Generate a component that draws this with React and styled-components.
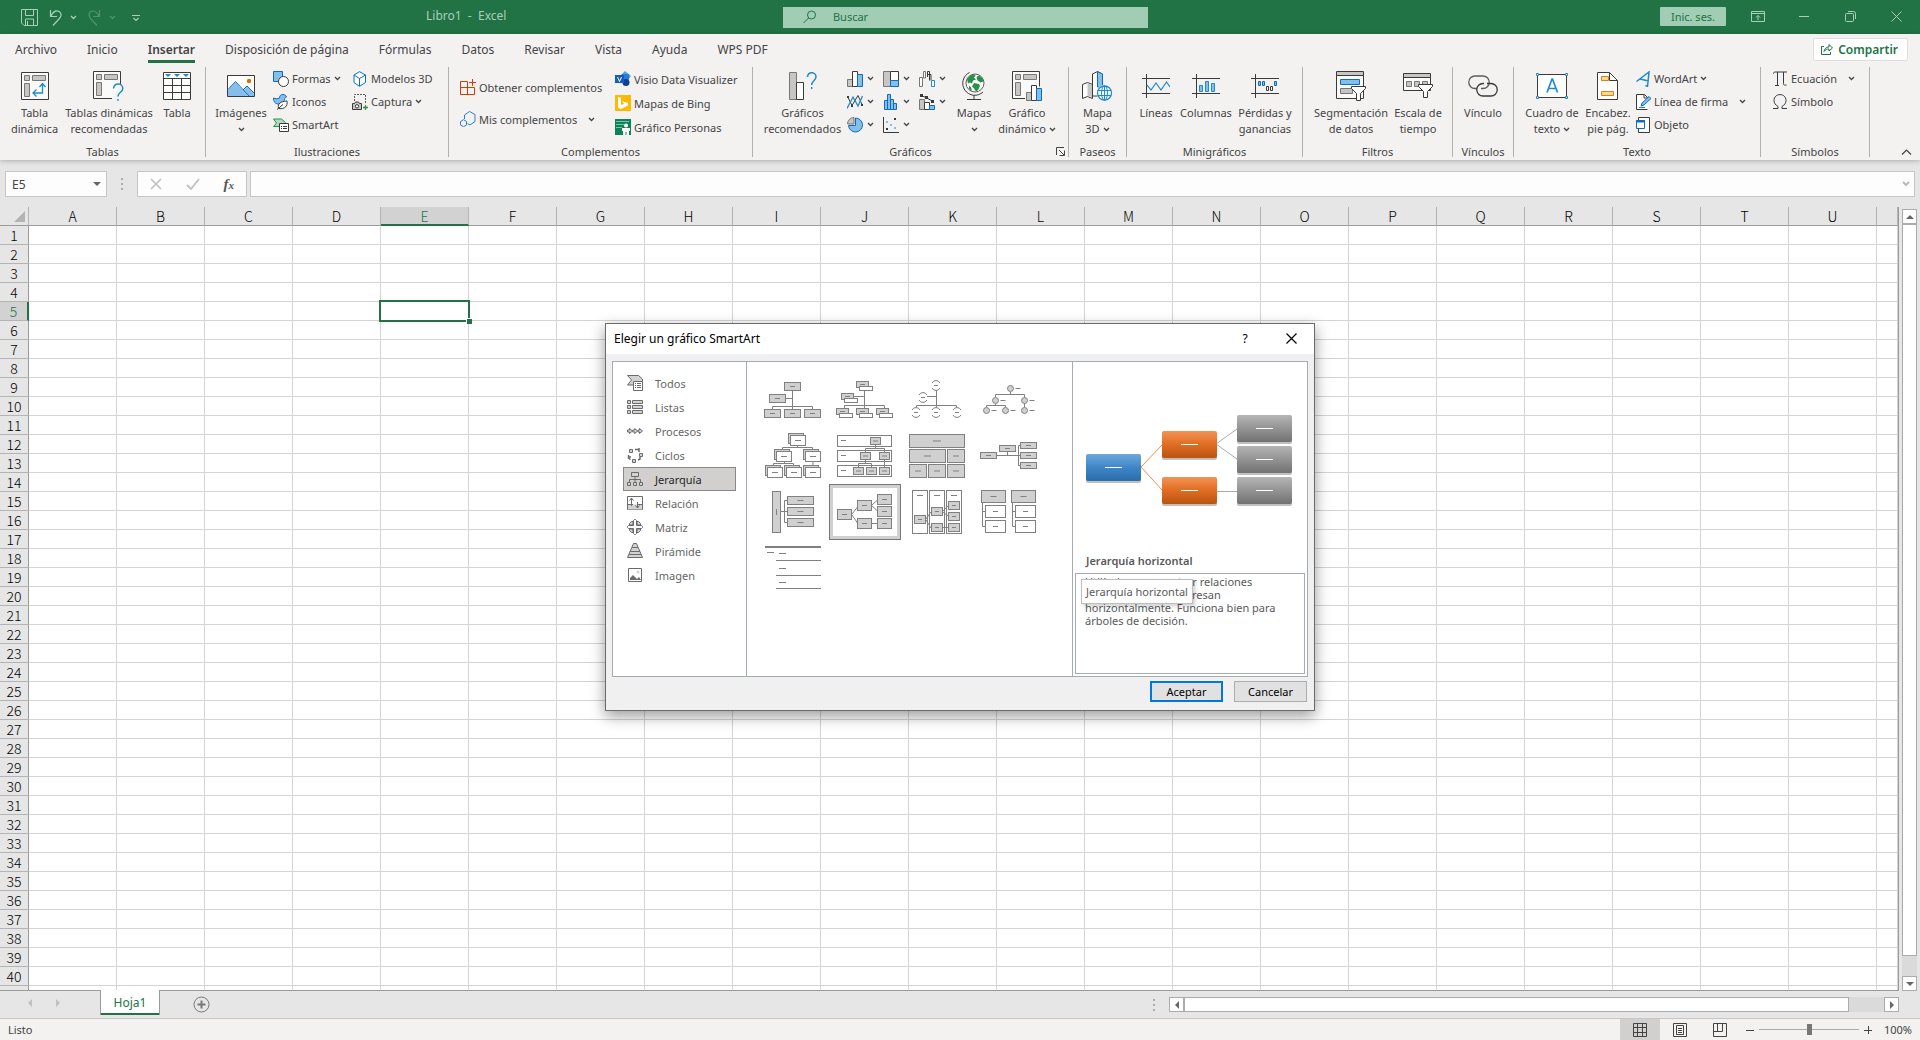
import { useState } from 'react'
import styled, { createGlobalStyle, css } from 'styled-components'

const GlobalStyle = createGlobalStyle`
    *, *::before, *::after {
        box-sizing: border-box;
    }
    body {
        margin: 0;
        overflow: hidden;
        font-family: "Noto Sans", "Open Sans", sans-serif;
        font-size: 11px;
        color: #444;
    }
    button, input {
        font: inherit;
        color: inherit;
        margin: 0;
        padding: 0;
        border: 0;
        border-radius: 0;
        background: none;
        outline: none;
    }
    svg {
        display: block;
        flex: none;
    }
`

const Window = styled.div`
    height: 100vh;
    display: flex;
    flex-direction: column;
    background: #e6e6e6;
`

/* title bar */

const TitleBar = styled.header`
    height: 34px;
    flex: none;
    display: flex;
    align-items: center;
    background: #217346;
    color: #a6d0b8;
    padding: 0 1px 6px 0;
`

const QuickAccess = styled.div`
    flex: 0 0 22.2%;
    display: flex;
    align-items: center;
    gap: 7px;
    padding: 7px 0 0 21px;
`

const IconButton = styled.button`
    display: flex;
    align-items: center;
    gap: 6px;
    opacity: ${({ $faded }) => ($faded ? 0.35 : 1)};
`

const DocName = styled.div`
    flex: 0 0 18.6%;
    font-size: 12px;
    line-height: 16px;
    white-space: pre;
    margin-top: 4px;
`

const Search = styled.label`
    width: 19%;
    height: 21px;
    margin-top: 6px;
    padding-left: 20px;
    display: flex;
    align-items: center;
    gap: 16px;
    background: #a0cdb3;
    color: #217346;

    input {
        flex: 1;
        min-width: 0;
        height: 19px;
        margin-bottom: 2px;
    }
    input::placeholder {
        color: #217346;
        opacity: 1;
    }
`

const WindowTools = styled.div`
    flex: 1;
    display: flex;
    justify-content: flex-end;
    align-items: center;
    margin-top: 5px;
`

const SignIn = styled.button`
    width: 66px;
    height: 19px;
    margin-right: 9px;
    border-radius: 1px;
    background: #a0cdb3;
    color: #217346;
`

const WinButton = styled.button`
    width: 46px;
    height: 24px;
    display: flex;
    align-items: center;
    justify-content: center;
`

/* ribbon */

const Ribbon = styled.section`
    flex: none;
    background: #f3f2f1;
    height: 126px;
    box-shadow: 0 1px 5px rgba(0, 0, 0, 0.25);
    position: relative;
    z-index: 1;
`

const Tabs = styled.nav`
    display: flex;
    align-items: center;
    height: 30px;
    padding-right: 12px;
`

const Tab = styled.button`
    height: 28px;
    padding: 0 15px;
    font-size: 12px;
    line-height: 29px;
    white-space: nowrap;
    color: #444;

    span {
        display: block;
        height: 28px;
        border-bottom: 3px solid ${({ $active }) => ($active ? '#217346' : 'transparent')};
        font-weight: ${({ $active }) => ($active ? 600 : 400)};
    }
`

const Share = styled.button`
    margin: 0 0 0 auto;
    height: 23px;
    padding: 0 9px 0 7px;
    display: flex;
    align-items: center;
    gap: 5px;
    background: #fff;
    border: 1px solid #e1dfdd;
    border-radius: 2px;
    color: #217346;
    font-size: 12px;
    font-weight: 600;
`

const RibbonBody = styled.div`
    display: flex;
    padding-top: 3px;
    height: 96px;
`

const GroupBox = styled.section`
    width: ${({ $width }) => $width}px;
    display: flex;
    flex-direction: column;
    flex: none;
    border-right: 1px solid transparent;
    border-image: linear-gradient(#b3b0ad 0 89px, transparent 89px) 1;
`

const GroupRow = styled.div`
    flex: 1;
    display: flex;
    padding-left: ${({ $pad }) => $pad || 0}px;
`

const GroupName = styled.div`
    height: 14px;
    line-height: 14px;
    margin-bottom: 1px;
    display: flex;
    justify-content: center;
    align-items: center;
    position: relative;

    button {
        position: absolute;
        right: 3px;
        top: 2px;
    }
`

const LargeButton = styled.button`
    width: ${({ $width }) => $width}px;
    display: flex;
    flex-direction: column;
    align-items: center;
    padding-top: 5px;
    line-height: 16px;
    white-space: nowrap;

    span {
        display: flex;
        align-items: center;
        gap: 3px;
        height: 16px;
    }
`

const LargeIcon = styled.div`
    height: 28px;
    margin-bottom: 5px;
    display: flex;
    align-items: center;
    justify-content: center;
`

const SmallColumn = styled.div`
    width: ${({ $width }) => ($width ? $width + 'px' : 'auto')};
    padding: ${({ $top }) => $top || 0}px 0 0 2px;
    display: flex;
    flex-direction: column;
`

const SmallButton = styled.button`
    height: ${({ $height }) => $height || 23}px;
    display: flex;
    align-items: center;
    gap: 3px;
    white-space: nowrap;
    text-align: left;

    span {
        margin-right: ${({ $split }) => ($split ? 8 : 0)}px;
    }
`

const ChartGrid = styled.div`
    display: grid;
    grid-template-columns: repeat(3, 36px);
    grid-auto-rows: 23px;
    padding-left: 4px;

    button {
        display: flex;
        align-items: center;
        gap: 4px;
    }
`

const Collapse = styled.button`
    margin: auto 8px 5px auto;
`

/* formula bar */

const FormulaRow = styled.div`
    flex: none;
    display: flex;
    align-items: stretch;
    height: 47px;
    padding: 11px 5px 10px;
`

const Field = styled.div`
    background: #fdfdfd;
    border: 1px solid #c6c6c6;
    display: flex;
    align-items: center;
    justify-content: space-between;
    padding: 0 5px 0 6px;
`

const NameBox = styled(Field)`
    width: 102px;

    input {
        width: 60px;
        font-size: 12px;
    }
`

const FormulaTools = styled(Field)`
    width: 110px;
    padding: 0 12px;
    margin-right: 3px;
`

const FxLabel = styled.span`
    font-family: "Liberation Serif", serif;
    font-style: italic;
    font-weight: 700;
    font-size: 15px;
    line-height: 16px;
    color: #555;

    small {
        font-size: 11px;
    }
`

const FormulaInput = styled(Field)`
    flex: 1;
    padding-right: 4px;

    input {
        flex: 1;
    }
`

const Grip = styled.div`
    width: 30px;
    flex: none;
    display: flex;
    align-items: center;
    justify-content: center;
`

/* sheet */

const SheetRow = styled.main`
    flex: 1;
    min-height: 0;
    display: flex;
`

const SheetClip = styled.div`
    flex: 1;
    min-width: 0;
    overflow: hidden;
    border-bottom: 1px solid #9b9b9b;
    border-right: 1px solid #9b9b9b;
`

const Sheet = styled.table`
    table-layout: fixed;
    width: 100%;
    border-collapse: separate;
    border-spacing: 0;
    font-family: "Noto Sans CJK SC", "Noto Sans", sans-serif;
    font-size: 14px;
    color: #000;

    th {
        font-weight: 300;
        padding: 0;
        overflow: hidden;
    }
`

const ColHead = styled.th`
    width: ${({ $rest }) => ($rest ? 'auto' : '88px')};
    height: 19px;
    line-height: 16px;
    background: ${({ $on }) => ($on ? '#d2d2d2' : '#e6e6e6')};
    color: ${({ $on }) => ($on ? '#217346' : 'inherit')};
    border-right: 1px solid #b4b4b4;
    border-bottom: ${({ $on }) => ($on ? '2px solid #217346' : '1px solid #9b9b9b')};
`

const Corner = styled.th`
    width: 29px;
    background: #e6e6e6;
    border-right: 1px solid #b4b4b4;
    border-bottom: 1px solid #9b9b9b;

    svg {
        margin-left: 14px;
    }
`

const RowHead = styled.th`
    height: 19px;
    line-height: 16px;
    background: ${({ $on }) => ($on ? '#d2d2d2' : '#e6e6e6')};
    color: ${({ $on }) => ($on ? '#217346' : 'inherit')};
    border-right: ${({ $on }) => ($on ? '2px solid #217346' : '1px solid #9b9b9b')};
    border-bottom: 1px solid #b4b4b4;
`

const Cell = styled.td`
    padding: 0;
    background: #fff;
    border-right: 1px solid #d4d4d4;
    border-bottom: 1px solid #d4d4d4;
    ${({ $on }) =>
        $on &&
        css`
            position: relative;
            z-index: 1;
        `}
`

const Selection = styled.div`
    position: absolute;
    inset: -2px;
    border: 2px solid #217346;

    &::after {
        content: '';
        position: absolute;
        right: -4px;
        bottom: -4px;
        width: 6px;
        height: 6px;
        background: #217346;
        border: 1px solid #fff;
        border-width: 1px 0 0 1px;
    }
`

const VScroll = styled.div`
    width: 21px;
    padding: 2px 3px 0;
    display: flex;
    flex-direction: column;
`

const ScrollButton = styled.button`
    width: 15px;
    height: 15px;
    flex: none;
    display: flex;
    align-items: center;
    justify-content: center;
    background: #fff;
    border: 1px solid #ababab;
`

const Track = styled.div`
    flex: 1;
    display: flex;
    flex-direction: ${({ $vertical }) => ($vertical ? 'column' : 'row')};
    background: #dadada;
`

const Thumb = styled.div`
    flex: 0 0 ${({ $size }) => $size};
    background: #fff;
    border: 1px solid #ababab;
`

/* bottom bars */

const SheetTabs = styled.div`
    flex: none;
    height: 27px;
    display: flex;
    align-items: flex-start;
    padding-right: 21px;
`

const SheetArrows = styled.div`
    width: 100px;
    display: flex;
    gap: 20px;
    padding: 8px 0 0 26px;
`

const SheetTab = styled.button`
    width: 60px;
    height: 25px;
    margin-top: -1px;
    background: #fff;
    color: #217346;
    font-size: 12px;
    border: 1px solid #9b9b9b;
    border-width: 0 1px 0;
    box-shadow: inset 0 -2px #217346;
    position: relative;
`

const AddSheet = styled.button`
    margin: 5px 0 0 33px;
`

const HScroll = styled.div`
    width: 760px;
    margin: 6px 0 0 auto;
    height: 15px;
    display: flex;
`

const StatusBar = styled.footer`
    flex: none;
    height: 22px;
    border-top: 1px solid #c6c6c6;
    background: #f3f2f1;
    display: flex;
    align-items: center;
    padding: 0 8px;
`

const StatusRight = styled.div`
    margin-left: auto;
    height: 100%;
    display: flex;
    align-items: center;
`

const Views = styled.div`
    display: flex;
    margin-right: 6px;
`

const ViewButton = styled.button`
    width: 40px;
    height: 21px;
    display: flex;
    align-items: center;
    justify-content: center;
    background: ${({ $on }) => ($on ? '#d2d0ce' : 'transparent')};
`

const ZoomSlider = styled.input`
    appearance: none;
    width: 100px;
    height: 12px;
    margin: 0 5px;
    background: linear-gradient(#ababab, #ababab) center / 100% 1px no-repeat;

    &::-webkit-slider-thumb {
        appearance: none;
        width: 5px;
        height: 11px;
        background: #777;
    }
`

const ZoomValue = styled.span`
    width: 40px;
    text-align: right;
`

/* dialog */

const Overlay = styled.div`
    position: absolute;
    inset: 0;
    display: flex;
    align-items: center;
    justify-content: center;
    padding-bottom: 6px;
    z-index: 2;
`

const DialogBox = styled.section`
    width: 710px;
    background: #f0f0f0;
    border: 1px solid #6b6b6b;
    box-shadow: 0 5px 14px rgba(0, 0, 0, 0.4);
`

const DialogTitle = styled.header`
    height: 30px;
    display: flex;
    align-items: center;
    padding: 0 0 2px 8px;
    background: #fff;
    color: #000;
    font-size: 12px;

    h1 {
        flex: 1;
        margin: 0;
        font-size: 12px;
        font-weight: 400;
    }
    button {
        width: 46px;
        height: 28px;
        display: flex;
        align-items: center;
        justify-content: center;
    }
`

const DialogPanel = styled.div`
    margin: 7px 6px 0;
    height: 316px;
    display: grid;
    grid-template-columns: 134px 326px 1fr;
    background: #fff;
    border: 1px solid #a5abb3;
`

const Categories = styled.div`
    padding: 9px 10px;
    border-right: 1px solid #a5abb3;
`

const Category = styled.button`
    width: 113px;
    height: 24px;
    padding-left: 3px;
    display: flex;
    align-items: center;
    gap: 12px;
    border: 1px solid ${({ $on }) => ($on ? '#8a8886' : 'transparent')};
    background: ${({ $on }) => ($on ? '#d2d0ce' : 'transparent')};
    color: ${({ $on }) => ($on ? '#262626' : '#666')};
`

const Gallery = styled.div`
    padding: 10px;
    display: grid;
    grid-template-columns: repeat(4, 72px);
    grid-auto-rows: 56px;
    align-content: start;
    border-right: 1px solid #a5abb3;
`

const Thumbnail = styled.button`
    width: 72px;
    height: 56px;
    ${({ $on }) =>
        $on &&
        css`
            outline: 1px solid #777;
            outline-offset: -1px;
            box-shadow: inset 0 0 0 4px #d2d0ce;
        `}
`

const Preview = styled.div`
    display: flex;
    flex-direction: column;
    padding: 0 2px 2px;
    color: #595959;

    h2 {
        margin: 0 0 4px 11px;
        font-size: 11px;
        line-height: 16px;
        font-weight: 600;
    }
`

const PreviewArt = styled.div`
    height: 191px;
    margin-left: -2px;
`

const Description = styled.div`
    flex: 1;
    border: 1px solid #a5abb3;
    padding: 1px 9px;
    line-height: 13px;
    position: relative;

    p {
        margin: 0;
        white-space: pre-line;
    }
`

const Tooltip = styled.div`
    position: absolute;
    left: 5px;
    top: 5px;
    height: 25px;
    padding: 0 4px;
    line-height: 23px;
    white-space: nowrap;
    background: #fff;
    border: 1px solid #bebebe;
    box-shadow: 2px 2px 4px rgba(0, 0, 0, 0.2);
`

const DialogButtons = styled.footer`
    display: flex;
    justify-content: flex-end;
    gap: 11px;
    padding: 4px 7px 8px;
`

const DialogButton = styled.button`
    width: 73px;
    height: 21px;
    background: #e1e1e1;
    color: #000;
    border: ${({ $primary }) => ($primary ? '2px solid #0078d7' : '1px solid #adadad')};
`

/* drawing helpers */

const dark = '#3b3a39'
const blue = '#1e8bcd'
const navy = '#0f6cbd'
const sky = '#83beec'
const silver = '#c8c6c4'

const Svg = ({ w = 16, h = 16, children, ...rest }) => (
    <svg width={w} height={h} viewBox={`0 0 ${w} ${h}`} fill='none' aria-hidden='true' {...rest}>
        {children}
    </svg>
)

const Chevron = ({ color = '#444' }) => (
    <Svg w={7} h={5}>
        <path d='M1 1l2.500 2.500L6 1' stroke={color} strokeWidth='1.300' />
    </Svg>
)

const Triangle = ({ dir, color = '#666' }) => {
    const shapes = {
        up: 'M0 6h8L4 2z',
        down: 'M0 2h8L4 6z',
        left: 'M6 0v8L2 4z',
        right: 'M2 0v8l4-4z',
    }
    return (
        <Svg w={8} h={8}>
            <path d={shapes[dir]} fill={color} />
        </Svg>
    )
}

const Dots = () => (
    <Svg w={2} h={12}>
        <path d='M0 0h2v2H0zM0 5h2v2H0zM0 10h2v2H0z' fill='#ababab' />
    </Svg>
)

/* large ribbon icons */

const PivotIcon = () => (
    <Svg w={28} h={28}>
        <path d='M.5.5h27v27H.5z' fill='#fafafa' stroke={dark} />
        <path d='M3.5 3.5h5v5h-5zM11.500 3.500h13v5h-13zM3.500 11.500h5v13h-5z' fill={silver} stroke='#797775' />
        <path d='M21.500 12v9h-9M18.500 15l3-3.500 3 3.500M15.500 17.500L12 21l3.500 3.500' stroke={blue} strokeWidth='1.300' />
    </Svg>
)

const PivotHelpIcon = () => (
    <Svg w={32} h={30}>
        <path d='M19 27.500H.5V.5h27v13' fill='#fafafa' stroke={dark} />
        <path d='M3.500 3.500h5v5h-5zM11.500 3.500h13v5h-13zM3.500 11.500h5v13h-5z' fill={silver} stroke='#797775' />
        <path d='M20.500 17.500c.3-3 2.200-4.500 4.700-4.500s4.600 1.800 4.600 4.400c0 4-4.800 3.800-4.800 8M25 28v1.800' stroke={blue} strokeWidth='1.500' />
    </Svg>
)

const TableIcon = () => (
    <Svg w={28} h={28}>
        <path d='M.5.5h27v27H.5z' fill='#fff' stroke={dark} />
        <path d='M1 6.500h26M1 13.500h26M1 20.500h26M9.500 6v21M18.500 6v21' stroke={dark} />
        <path d='M2 2h6L5 5zM11 2h6l-3 3zM20 2h6l-3 3z' fill={blue} />
    </Svg>
)

const PictureIcon = () => (
    <Svg w={28} h={22}>
        <path d='M.5.5h27v21H.5z' fill='#fff' stroke={dark} />
        <path d='M1 15l7.500-8L21 21H1z' fill={sky} />
        <path d='M16 15.500l4-4 7 7V21h-6z' fill={sky} />
        <path d='M1 14.500l7.500-8L22 21M16 15l4-4 7 7' stroke={navy} />
        <circle cx='22' cy='6' r='2.200' fill='#e06c00' />
    </Svg>
)

const ChartHelpIcon = () => (
    <Svg w={30} h={28}>
        <path d='M1.500.5h7v27h-7z' fill={silver} stroke='#797775' />
        <path d='M8.500 10.500h7v17h-7z' fill='#fff' stroke={dark} />
        <path d='M19.500 5c.3-3 2-4.300 4.200-4.300S28 2.300 28 4.800c0 4-4.300 4-4.300 8.200M23.700 15v2' stroke={blue} strokeWidth='1.500' />
    </Svg>
)

const GlobeIcon = () => (
    <Svg w={26} h={30}>
        <circle cx='14' cy='12' r='9' fill='#fff' stroke='#605e5c' />
        <path d='M6 8c2-3 5-5 8-4.500 1 1 0 2-1 3l2 2-3 1-1 3-2-1-2 1zM17 4.500c3 .5 5 3 5.500 6l-3 1-3-2-1-3zM13 12l5 1 1 2-2 4-2 1.500-2-3-2-2zM8 15l2 1 1 4-3-2z' fill='#2a9149' />
        <path d='M8.500 1.500A12 12 0 1 0 22 21M13 24v4M6 28.500h14' stroke={dark} />
    </Svg>
)

const PivotChartIcon = () => (
    <Svg w={30} h={30}>
        <path d='M13 27.500H.5V.5h27v15' fill='#fafafa' stroke={dark} />
        <path d='M3.500 3.500h5v5h-5zM11.500 3.500h13v5h-13zM3.500 11.500h5v13h-5z' fill={silver} stroke='#797775' />
        <path d='M14.500 21.500h5v8h-5z' fill={silver} stroke='#797775' />
        <path d='M19.500 14.500h5v15h-5z' fill='#fff' stroke={dark} />
        <path d='M24.500 17.500h5v12h-5z' fill={sky} stroke={navy} />
    </Svg>
)

const Map3DIcon = () => (
    <Svg w={31} h={30}>
        <path d='M.5 13.500l5-2 5 2v14l-5-2-5 2z' fill='#fff' stroke={dark} />
        <path d='M5.500 12l4.500 2v12l-4.500-1z' fill={silver} />
        <path d='M10.500 3l5-2.500 5 2.500v22h-10z' fill='#fff' stroke={dark} />
        <path d='M15.500.7l5 2.300v14l-5-1z' fill={sky} stroke={navy} />
        <circle cx='22.500' cy='22' r='8' fill='#f3f2f1' />
        <circle cx='22.500' cy='22' r='7' fill='#fff' stroke={blue} strokeWidth='1.300' />
        <ellipse cx='22.500' cy='22' rx='3' ry='7' stroke={blue} />
        <path d='M16 19.500h13M16 24.500h13M22.500 15v14' stroke={blue} />
    </Svg>
)

const SparkFrame = ({ children }) => (
    <Svg w={28} h={24}>
        <path d='M0 4.500h28M0 19.500h28M4.500 0v24' stroke={dark} />
        {children}
    </Svg>
)

const SparkLineIcon = () => (
    <SparkFrame>
        <path d='M5 11l4 5 5-7 5 7 5.500-8 3.500 5' stroke={blue} strokeWidth='1.200' />
    </SparkFrame>
)

const SparkColumnIcon = () => (
    <SparkFrame>
        <path d='M7.500 11.500h3v6h-3zM13.500 7.500h3v10h-3zM19.500 9.500h3v8h-3z' fill={sky} stroke={blue} />
    </SparkFrame>
)

const SparkWinIcon = () => (
    <SparkFrame>
        <path d='M7.500 7.500h2v4h-2zM11.500 7.500h2v4h-2zM23.500 7.500h2v4h-2z' fill={sky} stroke={navy} />
        <path d='M15.500 12.500h2v4h-2zM19.500 12.500h2v4h-2z' fill='#fff' stroke={dark} />
    </SparkFrame>
)

const SlicerIcon = () => (
    <Svg w={30} h={30}>
        <path d='M.5.5h27v27H.5z' fill='#fafafa' stroke={dark} />
        <path d='M1 1h26v3H1z' fill={silver} />
        <path d='M1 4.500h26' stroke={dark} />
        <path d='M4.500 8.500h19v5h-19z' fill={sky} stroke={navy} />
        <path d='M4.500 17.500h12v5h-12z' fill={silver} stroke='#797775' />
        <path d='M15.500 15.500h14v2l-5 5v7h-4v-7l-5-5z' fill='#fff' stroke={dark} />
    </Svg>
)

const TimelineIcon = () => (
    <Svg w={30} h={26}>
        <path d='M.5.5h27v17H.5z' fill='#fafafa' stroke={dark} />
        <path d='M1 1h26v3H1z' fill={silver} />
        <path d='M1 4.500h26' stroke={dark} />
        <path d='M3.500 8.500h5v5h-5zM11.500 8.500h5v5h-5zM19.500 8.500h5v3h-5z' fill={silver} stroke='#797775' />
        <path d='M15.500 11.500h14v2l-5 5v6h-4v-6l-5-5z' fill='#fff' stroke={dark} />
    </Svg>
)

const LinkIcon = () => (
    <Svg w={30} h={22}>
        <path d='M9 13.500H7a6.200 6.200 0 0 1 0-12.500h8a6.200 6.200 0 0 1 0 12.500h-2' stroke='#605e5c' strokeWidth='1.300' />
        <path d='M19 8.500h4a6.200 6.200 0 0 1 0 12.500h-8a6.200 6.200 0 0 1 0-12.500h1' stroke={dark} strokeWidth='1.300' />
    </Svg>
)

const TextBoxIcon = () => (
    <Svg w={32} h={26}>
        <path d='M1.500 1.500h29v23h-29z' fill='#fff' stroke={dark} />
        <path d='M11 19.500L16 6h.5l5 13.500M12.700 15.500h7' stroke={blue} strokeWidth='1.700' />
        <path d='M.5.5h2v2h-2zM29.500.5h2v2h-2zM.5 23.500h2v2h-2zM29.500 23.500h2v2h-2z' fill='#fff' stroke={blue} />
    </Svg>
)

const HeaderFooterIcon = () => (
    <Svg w={22} h={28}>
        <path d='M.5.5h12l8 8v19H.5z' fill='#fff' stroke={dark} />
        <path d='M12.500.5v8h8' stroke={dark} />
        <path d='M4.500 4.500h7v4h-7zM4.500 19.500h12v4h-12z' fill='#fcd98f' stroke='#e07c1a' />
    </Svg>
)

/* small ribbon icons */

const ShapesIcon = () => (
    <Svg>
        <path d='M.5.5h9v10h-9z' fill={sky} stroke={navy} />
        <circle cx='10.500' cy='10.500' r='5' fill='#fff' stroke={dark} />
    </Svg>
)

const IconsIcon = () => (
    <Svg>
        <path d='M.5 4c2 1 4 1 6 0 0-2.500 1.500-3.500 3.500-3.500s3 1 3.500 2.500c-1 .5-2 1-2 2.500 0 2-3 4.500-6 4.500S.5 8 .5 4z' fill={sky} stroke={navy} />
        <path d='M5.500 14c-1-4.500 2-6.500 8.500-7 1 5-2.500 8.500-8 7.500zM4 15.500l6-5' fill='#fff' stroke={dark} />
    </Svg>
)

const SmartArtIcon = () => (
    <Svg w={16} h={14}>
        <path d='M.5 1h8l4 3.500-3 4h-9l3-3.500z' fill='#b1dcbe' stroke='#2a9149' />
        <path d='M6.500 5.500h9v8h-9z' fill='#fff' stroke={dark} />
        <path d='M8 8.500h1M10 8.500h4M8 10.500h1M10 10.500h4' stroke={dark} />
    </Svg>
)

const CubeIcon = () => (
    <Svg>
        <path d='M2 4l5.500-3.300L13.500 4v7.500L7.500 15.300 2 11.500z' fill='#fff' stroke={navy} />
        <path d='M2 4l5.500 3.500L13.500 4M7.500 7.500v7.500' stroke={navy} />
    </Svg>
)

const CaptureIcon = () => (
    <Svg>
        <path d='M2.500 7V.5h11v9' stroke='#605e5c' strokeDasharray='2 1' />
        <path d='M.5 9.500h2l1-1.500h3l1 1.500h2v6h-9z' fill={silver} stroke={dark} />
        <circle cx='5' cy='12.300' r='1.700' fill='#fff' stroke={dark} />
        <path d='M13.500 11v5M11 13.500h5' stroke='#2a9149' strokeWidth='1.300' />
    </Svg>
)

const StoreIcon = () => (
    <Svg>
        <path d='M.5 2.500h7v6M.5 2.500v13h14v-7H.5M7.500 8.500v7' stroke='#d83b01' />
        <path d='M12.500 0v7M9 3.500h7' stroke='#d83b01' />
    </Svg>
)

const AddinsIcon = () => (
    <Svg>
        <path d='M4.500 8V4l5-3.500 5.500 3v7L10 14l-2.500-1.500' stroke='#2b7cd3' />
        <path d='M.5 10.500l3-1.800 3 1.800V14l-3 1.700-3-1.700z' stroke='#2b7cd3' />
    </Svg>
)

const VisioIcon = () => (
    <Svg>
        <path d='M10 0l6 5-3 4h-3L6 4z' fill='#41a5ee' />
        <path d='M7 3h7v5l-3 6-5-3z' fill='#2b7cd3' />
        <circle cx='11' cy='11.500' r='3.500' fill='#103f91' />
        <path d='M0 4h9v8H0z' fill='#185abd' />
        <path d='M2.500 6l2 4.500 2-4.500' stroke='#fff' />
    </Svg>
)

const BingIcon = () => (
    <Svg>
        <path d='M0 0h16v16H0z' fill='#ffb900' />
        <path d='M3 2l3 1v8l-3 2zM3 13l3-3 3-1-2-3 6 2v2.500L6 14z' fill='#fff' />
    </Svg>
)

const PeopleIcon = () => (
    <Svg>
        <path d='M0 0h16v16H0z' fill='#10825a' />
        <path d='M1 2.500h13M1 5.500h8M1 8.500h6' stroke='#7ac4a6' />
        <circle cx='11' cy='6.500' r='2' fill='#fff' />
        <path d='M7 9h8v3h-1v4h-2.500v-3h-1v3H8v-4H7z' fill='#fff' />
    </Svg>
)

const ColumnChartIcon = () => (
    <Svg>
        <path d='M.5 8.500h5v7h-5z' fill={silver} stroke='#797775' />
        <path d='M5.500.5h5v15h-5z' fill='#fff' stroke={dark} />
        <path d='M10.500 3.500h5v12h-5z' fill={sky} stroke={navy} />
    </Svg>
)

const TreemapIcon = () => (
    <Svg>
        <path d='M.5.5h7v15h-7z' fill={silver} stroke='#797775' />
        <path d='M7.500.5h8v9h-8z' fill='#fff' stroke={dark} />
        <path d='M7.500 9.500h8v6h-8z' fill={sky} stroke={navy} />
    </Svg>
)

const WaterfallIcon = () => (
    <Svg>
        <path d='M.5 15.500v-9h3v9zM4.500 7V.5h2V7z' fill='#fff' stroke='#797775' />
        <path d='M8.500 6V.5h2v9M8 3.500h4v6' stroke={dark} />
        <path d='M12.500 9.500h3v6h-3z' fill='#fff' stroke={blue} />
    </Svg>
)

const LineChartIcon = () => (
    <Svg>
        <path d='M1 3.500l4 8 6-10 4 9' stroke={dark} />
        <path d='M0 14.500L6 3l5 9 4.500-10' stroke={blue} strokeWidth='1.300' />
        <path d='M0 2h2v2H0zM4 11h2v2H4zM14 10h2v2h-2z' fill={dark} />
    </Svg>
)

const HistogramIcon = () => (
    <Svg>
        <path d='M1.500 6.500h3v9h-3zM4.500.5h3v15h-3zM7.500 5.500h3v10h-3zM10.500 9.500h3v6h-3z' fill={sky} stroke={navy} />
    </Svg>
)

const ComboIcon = () => (
    <Svg>
        <path d='M.5 5.500h5v10h-5z' fill={silver} stroke='#797775' />
        <path d='M5.500 8.500h5v7h-5z' fill='#fff' stroke={dark} />
        <path d='M10.500 11.500h5v4h-5z' fill={sky} stroke={navy} />
        <path d='M2 1.500l5 2 7 4' stroke={dark} />
        <path d='M1 0h3v3H1zM6 2h3v3H6zM12 6h3v3h-3z' fill={dark} />
    </Svg>
)

const PieIcon = () => (
    <Svg>
        <path d='M8.500 1a7 7 0 1 1-7 7.500h7z' fill={sky} stroke={navy} />
        <path d='M7 .5A6.500 6.500 0 0 0 .5 7H7z' fill={silver} stroke='#797775' />
    </Svg>
)

const ScatterIcon = () => (
    <Svg>
        <path d='M.5 0v15.500H16' stroke={dark} />
        <path d='M3 11h2v2H3zM11 1h2v2h-2z' fill={dark} />
        <path d='M3 4h2v2H3zM7 7h2v2H7zM11 10h2v2h-2z' fill={sky} />
    </Svg>
)

const WordArtIcon = () => (
    <Svg w={15}>
        <path d='M.5 10.500l12.500-9.500-1.500 14.500-2-1M4 8l8.500 2' stroke={blue} strokeWidth='1.500' />
    </Svg>
)

const SignatureIcon = () => (
    <Svg w={15}>
        <path d='M11.500 15.500H.5V.5h8l3 3v2' fill='#fff' stroke={dark} />
        <path d='M8 .5V4h3.500' stroke={dark} />
        <path d='M5 12l1-3 7-6.500 2 2L8 11z' fill={sky} stroke={navy} />
        <path d='M3 13.500h6' stroke={blue} />
    </Svg>
)

const ObjectIcon = () => (
    <Svg w={15}>
        <path d='M2.500.5h11v15h-11z' fill='#fff' stroke={dark} />
        <path d='M.5 3.500h8v8h-8z' fill='#fff' stroke={navy} />
        <path d='M0 4.500h9' stroke={navy} strokeWidth='2' />
    </Svg>
)

const PiIcon = () => (
    <Svg w={15}>
        <path d='M0 3c.5-1.500 1-2 2.500-2H14M4.500 1v13.500M10.500 1v11.500c0 1.500 1 2 3 1.500M2 14.500h4' stroke={dark} />
    </Svg>
)

const OmegaIcon = () => (
    <Svg w={15}>
        <path d='M0 14.500h5v-2C2.500 11 1 9 1 6.500 1 3 3.500.6 7 .6S13 3 13 6.500c0 2.500-1.500 4.500-4 6v2h5' stroke={dark} />
    </Svg>
)

/* dialog category icons */

const g = '#6b6b6b'
const lg = '#d2d2d2'

const categoryIcons = {
    Todos: (
        <>
            <path d='M.5.500h11l4 3.500v6H.5l4-5z' fill={lg} stroke={g} />
            <path d='M6.500 6.500h9v9h-9z' fill='#fff' stroke={g} />
            <path d='M8 8.500h1M10 8.500h4M8 10.500h1M10 10.500h4M8 12.500h1M10 12.500h4' stroke={g} />
        </>
    ),
    Listas: <path d='M.5 1.500h3v3h-3zM5.500 1.500h10v3h-10zM.5 6.500h3v3h-3zM5.500 6.500h10v3h-10zM.5 11.500h3v3h-3zM5.500 11.500h10v3h-10z' fill={lg} stroke={g} />,
    Procesos: <path d='M.5 7h2V5.500L5.500 8l-3 2.500V9h-2zM5.700 7h2V5.500l3 2.500-3 2.500V9h-2zM11 7h1.500V5.500l3 2.500-3 2.500V9H11z' fill={lg} stroke={g} />,
    Ciclos: (
        <>
            <path d='M2.500 2.500h3v3h-3zM12.500 6.500h3v3h-3zM5.500 12.500h3v3h-3z' fill={lg} stroke={g} />
            <path d='M8 2.500h4M12 1v4M1.500 8v3l2 1.500M1 10h3M11 13l2-1v-2' stroke={g} strokeWidth='1.500' />
        </>
    ),
    Jerarquía: (
        <>
            <path d='M8 6v5M2.500 11V8.500h11V11' stroke={g} />
            <path d='M4.500 1.500h7v4h-7zM.5 11.500h3v3h-3zM6.500 11.500h3v3h-3zM12.500 11.500h3v3h-3z' fill={lg} stroke={g} />
        </>
    ),
    Relación: (
        <>
            <path d='M.5 1.500h15v13H.5z' fill='#fff' stroke={g} />
            <path d='M1 9.500h14v5H1z' fill={lg} />
            <path d='M1 9.500h5M11 9.500h4M4.500 11V3M2.500 5.500l2-2.500 2 2.500M10.500 7v6M8.500 10.500l2 2.500 2-2.500' stroke={g} />
        </>
    ),
    Matriz: (
        <>
            <circle cx='8' cy='8' r='5.500' stroke={g} />
            <path d='M6.500 6.500v-5L7.500.5h1l1 1v5h5l1 1v1l-1 1h-5v5l-1 1h-1l-1-1v-5h-5l-1-1v-1l1-1z' fill='#fff' stroke={g} />
            <path d='M2.500 6V4.500l2-2H6V6zM10 2.500h1.500l2 2V6H10zM2.500 10H6v3.500H4.500l-2-2zM10 10h3.500v1.500l-2 2H10z' fill={lg} stroke={g} />
        </>
    ),
    Pirámide: (
        <>
            <path d='M6.500.5h3l6 14H.5z' fill={lg} stroke={g} />
            <path d='M5 4.500h6M3 8.500h10M2 11.500h12' stroke={g} />
        </>
    ),
    Imagen: (
        <>
            <path d='M1.500 1.500h13v13h-13z' fill='#fff' stroke={g} />
            <path d='M3 13v-2l3-3 4 4 2-2 2 3z' fill={g} />
            <circle cx='11' cy='5' r='1.500' fill={lg} />
        </>
    ),
}

/* gallery drawings */

const Box = ({ x, y, w, h, fill = '#d0d0d0', dash = 5 }) => (
    <>
        <rect x={x} y={y} width={w} height={h} fill={fill} stroke='#808080' />
        {dash > 0 && <path d={`M${x + (w - dash) / 2} ${y + h / 2}h${dash}`} stroke='#808080' />}
    </>
)

const boxes = (list, w, h, fill, dash) =>
    list.map(([x, y]) => <Box key={`${x}-${y}`} x={x} y={y} w={w} h={h} fill={fill} dash={dash} />)

const Lines = ({ d }) => <path d={d} stroke='#808080' />

const arc = (x, y) => `M${x - 4} ${y - 2.500}a4.500 4.500 0 0 1 8 0M${x - 4} ${y + 2.500}a4.500 4.500 0 0 0 8 0M${x - 2} ${y}h4`

const layouts = [
    <>
        <Lines d='M35.500 18v19M28 26.500h7.500M15.500 37v-2.500h40V37' />
        {boxes([[27.5, 10.5], [12.5, 22.5], [7.5, 37.5], [27.5, 37.5], [47.5, 37.5]], 16, 8)}
    </>,
    <>
        <Lines d='M35.500 16v21M25 24.500h10.500M15.500 37v-3.500h40V37' />
        {boxes([[27.5, 9.5], [12.5, 21.5], [7.5, 36.5], [27.5, 36.5], [47.5, 36.5]], 12, 6)}
        {boxes([[30.5, 14.5], [15.5, 26.5], [10.5, 41.5], [30.5, 41.5], [50.5, 41.5]], 13, 4, '#fff', 0)}
    </>,
    <>
        <Lines d='M35.500 18.500v17M26 24.500h9.500M15.500 35.500v-2h40v2' />
        <Lines d={arc(35, 13.5) + arc(22, 25.5) + arc(15, 40.5) + arc(35, 40.5) + arc(56, 40.5)} />
    </>,
    <>
        <Lines d='M37.500 20v2.500M22.500 25v-2.500h29V35M22.500 32v1.500M13.500 35v-1.500h19V35' />
        {[[37.5, 16.5], [22.5, 28.5], [51.5, 28.5], [13.5, 38.5], [32.5, 38.5], [51.5, 38.5]].map(([x, y]) => (
            <g key={x + '-' + y} stroke='#808080'>
                <circle cx={x} cy={y} r='3' fill='#d0d0d0' />
                <path d={`M${x + 5} ${y}h5`} />
            </g>
        ))}
    </>,
    <>
        <Lines d='M40.500 17v2.500M25.500 22v-2.500h30V22M27.500 34v1.500M16.500 38v-2.500h20V38M56 34v4' />
        {[[31.5, 5.5], [17.5, 21.5], [46.5, 21.5], [8.5, 37.5], [27.5, 37.5], [46.5, 37.5]].map(([x, y]) => (
            <g key={x + '-' + y}>
                <Box x={x} y={y} w={15} h={10} dash={0} />
                <Box x={x + 2} y={y + 2} w={15} h={10} fill='#fff' dash={6} />
            </g>
        ))}
    </>,
    <>
        {boxes([[8.5, 7.5], [8.5, 22.5], [8.5, 37.5]], 54, 11, '#fff', 0)}
        <Lines d='M12 12.500h5M12 27.500h5M12 42.500h5M46.500 17v3.500M36.500 24v-3.500h19V39M36.500 32v3.500M29.500 39v-3.500h13V39' />
        {boxes([[41.5, 9.5], [31.5, 24.5], [50.5, 24.5], [24.5, 39.5], [37.5, 39.5], [50.5, 39.5]], 10, 7)}
    </>,
    <>
        <Box x={8.5} y={6.5} w={55} h={13} dash={8} />
        <Box x={8.5} y={21.5} w={36} h={13} dash={7} />
        {boxes([[46.5, 21.5], [8.5, 36.5], [27.5, 36.5], [46.5, 36.5]], 17, 13, '#d0d0d0', 6)}
    </>,
    <>
        <Lines d='M23 27.500h24M34.500 24v3.500M47 17.500h-1.500v20H47' />
        {boxes([[7.5, 24.5], [26.5, 17.5], [47.5, 14.5], [47.5, 24.5], [47.5, 34.5]], 16, 6)}
    </>,
    <>
        <Box x={15.5} y={7.5} w={8} h={41} dash={0} />
        <Lines d='M19.500 25v6M24 27.500h6M30 16.500h-2.500v22H30' />
        {boxes([[30.5, 12.5], [30.5, 23.5], [30.5, 34.5]], 26, 8, '#d0d0d0', 6)}
    </>,
    <>
        <Lines d='M23 30l5.500-7M23 31l5.500 8M43 21l5.500-5M43 22l5.500 5M43 39.500h5' />
        {boxes([[8.5, 25.5], [28.5, 16.5], [28.5, 34.5], [48.5, 10.5], [48.5, 22.5], [48.5, 34.5]], 14, 10)}
    </>,
    <>
        {boxes([[11.5, 6.5], [28.5, 6.5], [45.5, 6.5]], 15, 43, '#fff', 0)}
        <Lines d='M16 11.500h6M33 11.500h6M50 11.500h6M25 35l5-7M25 36l5 8M42 27l5-5M42 28l5 4M42 43.500h5' />
        {boxes([[13.5, 31.5], [30.5, 23.5], [30.5, 39.5], [47.5, 17.5], [47.5, 28.5], [47.5, 39.5]], 11, 8, '#d0d0d0', 4)}
    </>,
    <>
        <Lines d='M9.500 18v24.500h3M9.500 27.500h3M39.500 18v24.500h3M39.500 27.500h3' />
        {boxes([[8.5, 6.5], [38.5, 6.5]], 24, 12, '#d0d0d0', 6)}
        {boxes([[12.5, 21.5], [12.5, 36.5], [42.5, 21.5], [42.5, 36.5]], 20, 12, '#fff')}
    </>,
    <>
        <path d='M8 7h56' stroke='#808080' strokeWidth='2' />
        <Lines d='M10 12.500h7M22 13.500h7M19 20.500h45M22 28.500h7M19 35.500h45M22 42.500h7M19 48.500h45' />
    </>,
]

const PreviewDrawing = () => (
    <Svg w={232} h={190}>
        <defs>
            <linearGradient id='blueFill' x1='0' y1='0' x2='0' y2='1'>
                <stop offset='0' stopColor='#6ea8dc' />
                <stop offset='0.5' stopColor='#3f86c6' />
                <stop offset='1' stopColor='#2b6cab' />
            </linearGradient>
            <linearGradient id='orangeFill' x1='0' y1='0' x2='0' y2='1'>
                <stop offset='0' stopColor='#f39355' />
                <stop offset='0.5' stopColor='#e06d22' />
                <stop offset='1' stopColor='#b9540f' />
            </linearGradient>
            <linearGradient id='greyFill' x1='0' y1='0' x2='0' y2='1'>
                <stop offset='0' stopColor='#b5b5b5' />
                <stop offset='0.5' stopColor='#939393' />
                <stop offset='1' stopColor='#727272' />
            </linearGradient>
        </defs>
        <path d='M68 105l22-23M68 105l22 24' stroke='#ee8b4d' />
        <path d='M143 82l21-15M143 82l21 15M143 129.500h21' stroke='#aaa' />
        {[
            [13, 92, 'blueFill'],
            [89, 69, 'orangeFill'],
            [89, 115, 'orangeFill'],
            [164, 53, 'greyFill'],
            [164, 84, 'greyFill'],
            [164, 115, 'greyFill'],
        ].map(([x, y, fill]) => (
            <g key={x + '-' + y}>
                <rect x={x} y={y + 1} width='55' height='28' rx='2' fill='#000' opacity='0.25' />
                <rect x={x} y={y} width='55' height='27' rx='2' fill={`url(#${fill})`} />
                <path d={`M${x + 19} ${y + 13.500}h17`} stroke='#fff' />
            </g>
        ))}
    </Svg>
)

/* components */

const Large = ({ icon, lines, width, menu }) => (
    <LargeButton $width={width}>
        <LargeIcon>{icon}</LargeIcon>
        {lines.map((line, i) => (
            <span key={line}>
                {line}
                {menu && i === lines.length - 1 && lines.length > 1 && <Chevron />}
            </span>
        ))}
        {menu && lines.length === 1 && (
            <span>
                <Chevron />
            </span>
        )}
    </LargeButton>
)

const Small = ({ icon, text, menu, split, height }) => (
    <SmallButton $height={height} $split={split}>
        {icon}
        <span>{text}</span>
        {(menu || split) && <Chevron />}
    </SmallButton>
)

const Group = ({ name, width, pad, launcher, children }) => (
    <GroupBox $width={width}>
        <GroupRow $pad={pad}>{children}</GroupRow>
        <GroupName>
            {name}
            {launcher && (
                <button aria-label='Ver todos los gráficos'>
                    <Svg w={9} h={9}>
                        <path d='M.5 8V.5H8M3 3l5 5M8.500 3.500v5h-5' stroke='#444' />
                    </Svg>
                </button>
            )}
        </GroupName>
    </GroupBox>
)

const tabs = ['Archivo', 'Inicio', 'Insertar', 'Disposición de página', 'Fórmulas', 'Datos', 'Revisar', 'Vista', 'Ayuda', 'WPS PDF']
const charts = [ColumnChartIcon, TreemapIcon, WaterfallIcon, LineChartIcon, HistogramIcon, ComboIcon, PieIcon, ScatterIcon]
const chartNames = ['Columnas', 'Jerarquía', 'Cascada', 'Líneas', 'Estadística', 'Combinado', 'Circular', 'Dispersión']
const columns = 'ABCDEFGHIJKLMNOPQRSTU'.split('')
const rows = Array.from({ length: 40 }, (_, i) => i + 1)

const TitleRow = () => (
    <TitleBar>
        <QuickAccess>
            <IconButton aria-label='Guardar'>
                <Svg w={17} h={17}>
                    <path d='M.5.5h16v16H3l-2.500-2.500zM4.500.5v6h8v-6M4.500 16v-6h8v6M6.500 12v4' stroke='currentColor' />
                </Svg>
            </IconButton>
            <IconButton aria-label='Deshacer'>
                <Svg w={19} h={18}>
                    <path d='M5.500 1v6.500H12M6 7c2-4 5-6 8-4.500s2.500 5 0 7.500l-6 6.500' stroke='currentColor' strokeWidth='1.200' />
                </Svg>
                <Chevron color='currentColor' />
            </IconButton>
            <IconButton aria-label='Rehacer' $faded>
                <Svg w={19} h={18}>
                    <path d='M15.500 1v6.500H9M15 7c-2-4-5-6-8-4.500s-2.500 5 0 7.500l6 6.500' stroke='currentColor' strokeWidth='1.200' />
                </Svg>
                <Chevron color='currentColor' />
            </IconButton>
            <IconButton aria-label='Personalizar'>
                <Svg w={24} h={8}>
                    <path d='M9 1.500h8M10.500 4l2.500 2.500L15.500 4' stroke='currentColor' strokeWidth='1.200' />
                </Svg>
            </IconButton>
        </QuickAccess>
        <DocName>Libro1  -  Excel</DocName>
        <Search>
            <Svg w={14} h={14}>
                <circle cx='8.500' cy='5' r='4' stroke='#217346' />
                <path d='M5.500 8L.5 13' stroke='#217346' />
            </Svg>
            <input type='search' placeholder='Buscar' aria-label='Buscar' />
        </Search>
        <WindowTools>
            <SignIn>Inic. ses.</SignIn>
            <WinButton aria-label='Opciones de cinta'>
                <Svg w={14} h={12}>
                    <path d='M.5.5h13v10H.5zM.5 2.500h13M7 9V4.500M5 6.500l2-2 2 2' stroke='currentColor' />
                </Svg>
            </WinButton>
            <WinButton aria-label='Minimizar'>
                <Svg w={10} h={10}>
                    <path d='M0 4.500h10' stroke='currentColor' />
                </Svg>
            </WinButton>
            <WinButton aria-label='Restaurar'>
                <Svg w={11} h={11}>
                    <path d='M.5 3.500q0-1 1-1h6q1 0 1 1v6q0 1-1 1h-6q-1 0-1-1zM3 .5h5.500q2 0 2 2V8' stroke='currentColor' />
                </Svg>
            </WinButton>
            <WinButton aria-label='Cerrar'>
                <Svg w={11} h={11}>
                    <path d='M.5.5l10 10M10.500.5l-10 10' stroke='currentColor' />
                </Svg>
            </WinButton>
        </WindowTools>
    </TitleBar>
)

const RibbonBar = () => (
    <Ribbon>
        <Tabs>
            {tabs.map((name) => (
                <Tab key={name} $active={name === 'Insertar'}>
                    <span>{name}</span>
                </Tab>
            ))}
            <Share>
                <Svg w={12} h={12}>
                    <path d='M3 3.500H.5v8h9V9M3 8.500c.5-3 2.500-4.500 5-4.500V1.500L11.500 5 8 8V6C6 6 4.500 6.500 3 8.500z' stroke='#217346' />
                </Svg>
                Compartir
            </Share>
        </Tabs>
        <RibbonBody>
            <Group name='Tablas' width={206} pad={4}>
                <Large width={61} icon={<PivotIcon />} lines={['Tabla', 'dinámica']} />
                <Large width={88} icon={<PivotHelpIcon />} lines={['Tablas dinámicas', 'recomendadas']} />
                <Large width={48} icon={<TableIcon />} lines={['Tabla']} />
            </Group>
            <Group name='Ilustraciones' width={243} pad={5}>
                <Large width={60} icon={<PictureIcon />} lines={['Imágenes']} menu />
                <SmallColumn $width={79}>
                    <Small icon={<ShapesIcon />} text='Formas' menu />
                    <Small icon={<IconsIcon />} text='Iconos' />
                    <Small icon={<SmartArtIcon />} text='SmartArt' />
                </SmallColumn>
                <SmallColumn>
                    <Small icon={<CubeIcon />} text='Modelos 3D' />
                    <Small icon={<CaptureIcon />} text='Captura' menu />
                </SmallColumn>
            </Group>
            <Group name='Complementos' width={304} pad={9}>
                <SmallColumn $width={155} $top={4}>
                    <Small height={32} icon={<StoreIcon />} text='Obtener complementos' />
                    <Small height={32} icon={<AddinsIcon />} text='Mis complementos' split />
                </SmallColumn>
                <SmallColumn>
                    <Small height={24} icon={<VisioIcon />} text='Visio Data Visualizer' />
                    <Small height={24} icon={<BingIcon />} text='Mapas de Bing' />
                    <Small height={24} icon={<PeopleIcon />} text='Gráfico Personas' />
                </SmallColumn>
            </Group>
            <Group name='Gráficos' width={316} pad={9} launcher>
                <Large width={81} icon={<ChartHelpIcon />} lines={['Gráficos', 'recomendados']} />
                <ChartGrid>
                    {charts.map((Icon, i) => (
                        <button key={chartNames[i]} aria-label={chartNames[i]}>
                            <Icon />
                            <Chevron />
                        </button>
                    ))}
                </ChartGrid>
                <Large width={38} icon={<GlobeIcon />} lines={['Mapas']} menu />
                <Large width={68} icon={<PivotChartIcon />} lines={['Gráfico', 'dinámico']} menu />
            </Group>
            <Group name='Paseos' width={58}>
                <Large width={57} icon={<Map3DIcon />} lines={['Mapa', '3D']} menu />
            </Group>
            <Group name='Minigráficos' width={176} pad={7}>
                <Large width={44} icon={<SparkLineIcon />} lines={['Líneas']} />
                <Large width={56} icon={<SparkColumnIcon />} lines={['Columnas']} />
                <Large width={62} icon={<SparkWinIcon />} lines={['Pérdidas y', 'ganancias']} />
            </Group>
            <Group name='Filtros' width={150} pad={8}>
                <Large width={80} icon={<SlicerIcon />} lines={['Segmentación', 'de datos']} />
                <Large width={54} icon={<TimelineIcon />} lines={['Escala de', 'tiempo']} />
            </Group>
            <Group name='Vínculos' width={61}>
                <Large width={60} icon={<LinkIcon />} lines={['Vínculo']} />
            </Group>
            <Group name='Texto' width={247} pad={8}>
                <Large width={60} icon={<TextBoxIcon />} lines={['Cuadro de', 'texto']} menu />
                <Large width={52} icon={<HeaderFooterIcon />} lines={['Encabez.', 'pie pág.']} />
                <SmallColumn>
                    <Small icon={<WordArtIcon />} text='WordArt' menu />
                    <Small icon={<SignatureIcon />} text='Línea de firma' split />
                    <Small icon={<ObjectIcon />} text='Objeto' />
                </SmallColumn>
            </Group>
            <Group name='Símbolos' width={109} pad={10}>
                <SmallColumn>
                    <Small icon={<PiIcon />} text='Ecuación' split />
                    <Small icon={<OmegaIcon />} text='Símbolo' />
                </SmallColumn>
            </Group>
            <Collapse aria-label='Contraer la cinta'>
                <Svg w={11} h={6}>
                    <path d='M1 5.500l4.500-4.500L10 5.500' stroke='#444' strokeWidth='1.200' />
                </Svg>
            </Collapse>
        </RibbonBody>
    </Ribbon>
)

const FormulaBar = () => (
    <FormulaRow>
        <NameBox>
            <input aria-label='Cuadro de nombres' defaultValue='E5' />
            <Triangle dir='down' />
        </NameBox>
        <Grip>
            <Dots />
        </Grip>
        <FormulaTools>
            <button aria-label='Cancelar entrada'>
                <Svg w={12} h={12}>
                    <path d='M1 1l10 10M11 1L1 11' stroke='#c0c0c0' strokeWidth='1.600' />
                </Svg>
            </button>
            <button aria-label='Introducir'>
                <Svg w={14} h={12}>
                    <path d='M1 7l4 4 8-10' stroke='#c0c0c0' strokeWidth='1.800' />
                </Svg>
            </button>
            <button aria-label='Insertar función'>
                <FxLabel>
                    f<small>x</small>
                </FxLabel>
            </button>
        </FormulaTools>
        <FormulaInput>
            <input aria-label='Barra de fórmulas' />
            <Svg w={8} h={6}>
                <path d='M1 1l3 3 3-3' stroke='#b5b5b5' strokeWidth='1.800' />
            </Svg>
        </FormulaInput>
    </FormulaRow>
)

const Spreadsheet = () => (
    <SheetRow>
        <SheetClip>
            <Sheet>
                <thead>
                    <tr>
                        <Corner aria-label='Seleccionar todo'>
                            <Svg w={11} h={11}>
                                <path d='M11 0v11H0z' fill='#b4b4b4' />
                            </Svg>
                        </Corner>
                        {columns.map((c) => (
                            <ColHead key={c} scope='col' $on={c === 'E'}>
                                {c}
                            </ColHead>
                        ))}
                        <ColHead $rest />
                    </tr>
                </thead>
                <tbody>
                    {rows.map((r) => (
                        <tr key={r}>
                            <RowHead scope='row' $on={r === 5}>
                                {r}
                            </RowHead>
                            {columns.map((c) => {
                                const on = r === 5 && c === 'E'
                                return (
                                    <Cell key={c} $on={on}>
                                        {on && <Selection />}
                                    </Cell>
                                )
                            })}
                            <Cell />
                        </tr>
                    ))}
                    <tr>
                        <RowHead />
                        {columns.map((c) => (
                            <Cell key={c} />
                        ))}
                        <Cell />
                    </tr>
                </tbody>
            </Sheet>
        </SheetClip>
        <VScroll>
            <ScrollButton aria-label='Subir'>
                <Triangle dir='up' />
            </ScrollButton>
            <Track $vertical>
                <Thumb $size='calc(100% - 20px)' />
            </Track>
            <ScrollButton aria-label='Bajar'>
                <Triangle dir='down' />
            </ScrollButton>
        </VScroll>
    </SheetRow>
)

const Bottom = () => (
    <>
        <SheetTabs>
            <SheetArrows>
                <Triangle dir='left' color='#c0c0c0' />
                <Triangle dir='right' color='#c0c0c0' />
            </SheetArrows>
            <SheetTab>Hoja1</SheetTab>
            <AddSheet aria-label='Hoja nueva'>
                <Svg w={17} h={17}>
                    <circle cx='8.500' cy='8.500' r='7.500' stroke='#777' />
                    <path d='M8.500 4.500v8M4.500 8.500h8' stroke='#777' strokeWidth='2' />
                </Svg>
            </AddSheet>
            <HScroll>
                <Grip>
                    <Dots />
                </Grip>
                <ScrollButton aria-label='Izquierda'>
                    <Triangle dir='left' />
                </ScrollButton>
                <Track>
                    <Thumb $size='95%' />
                </Track>
                <ScrollButton aria-label='Derecha'>
                    <Triangle dir='right' />
                </ScrollButton>
            </HScroll>
        </SheetTabs>
        <StatusBar>
            Listo
            <StatusRight>
                <Views>
                    <ViewButton $on aria-label='Normal'>
                        <Svg w={14} h={14}>
                            <path d='M.5.5h13v13H.5zM.5 4.500h13M.5 9.500h13M4.500.5v13M9.500.5v13' stroke='#444' />
                        </Svg>
                    </ViewButton>
                    <ViewButton aria-label='Diseño de página'>
                        <Svg w={14} h={14}>
                            <path d='M.5.5h13v13H.5zM3.500 2.500h7v9h-7zM5 5.500h4M5 7.500h4M5 9.500h4' stroke='#444' />
                        </Svg>
                    </ViewButton>
                    <ViewButton aria-label='Salto de página'>
                        <Svg w={14} h={14}>
                            <path d='M.5.5h13v13H.5zM.5 8.500h9V.5M4.500.5v8' stroke='#444' />
                        </Svg>
                    </ViewButton>
                </Views>
                <button aria-label='Alejar'>
                    <Svg w={8} h={8}>
                        <path d='M0 4.500h8' stroke='#444' />
                    </Svg>
                </button>
                <ZoomSlider type='range' min='0' max='100' defaultValue='50' aria-label='Zoom' />
                <button aria-label='Acercar'>
                    <Svg w={8} h={8}>
                        <path d='M0 4.500h8M4.500 0v8' stroke='#444' />
                    </Svg>
                </button>
                <ZoomValue>100%</ZoomValue>
            </StatusRight>
        </StatusBar>
    </>
)

const SmartArtDialog = () => {
    const [category, setCategory] = useState('Jerarquía')
    const [layout, setLayout] = useState(9)

    return (
        <Overlay>
            <DialogBox role='dialog' aria-labelledby='dialog-title'>
                <DialogTitle>
                    <h1 id='dialog-title'>Elegir un gráfico SmartArt</h1>
                    <button>?</button>
                    <button aria-label='Cerrar'>
                        <Svg w={11} h={11}>
                            <path d='M.5.5l10 10M10.500.5l-10 10' stroke='#000' strokeWidth='1.200' />
                        </Svg>
                    </button>
                </DialogTitle>
                <DialogPanel>
                    <Categories>
                        {Object.keys(categoryIcons).map((name) => (
                            <Category key={name} $on={name === category} onClick={() => setCategory(name)}>
                                <Svg>{categoryIcons[name]}</Svg>
                                {name}
                            </Category>
                        ))}
                    </Categories>
                    <Gallery>
                        {layouts.map((drawing, i) => (
                            <Thumbnail key={i} aria-label={`Diseño ${i + 1}`} $on={i === layout} onClick={() => setLayout(i)}>
                                <Svg w={72} h={56}>{drawing}</Svg>
                            </Thumbnail>
                        ))}
                    </Gallery>
                    <Preview>
                        <PreviewArt>
                            <PreviewDrawing />
                        </PreviewArt>
                        <h2>Jerarquía horizontal</h2>
                        <Description>
                            <p>{'Utilícelo para mostrar relaciones\njerárquicas que progresan\nhorizontalmente. Funciona bien para\nárboles de decisión.'}</p>
                            <Tooltip role='tooltip'>Jerarquía horizontal</Tooltip>
                        </Description>
                    </Preview>
                </DialogPanel>
                <DialogButtons>
                    <DialogButton $primary>Aceptar</DialogButton>
                    <DialogButton>Cancelar</DialogButton>
                </DialogButtons>
            </DialogBox>
        </Overlay>
    )
}

const App = () => (
    <Window>
        <GlobalStyle />
        <TitleRow />
        <RibbonBar />
        <FormulaBar />
        <Spreadsheet />
        <Bottom />
        <SmartArtDialog />
    </Window>
)

export default App
